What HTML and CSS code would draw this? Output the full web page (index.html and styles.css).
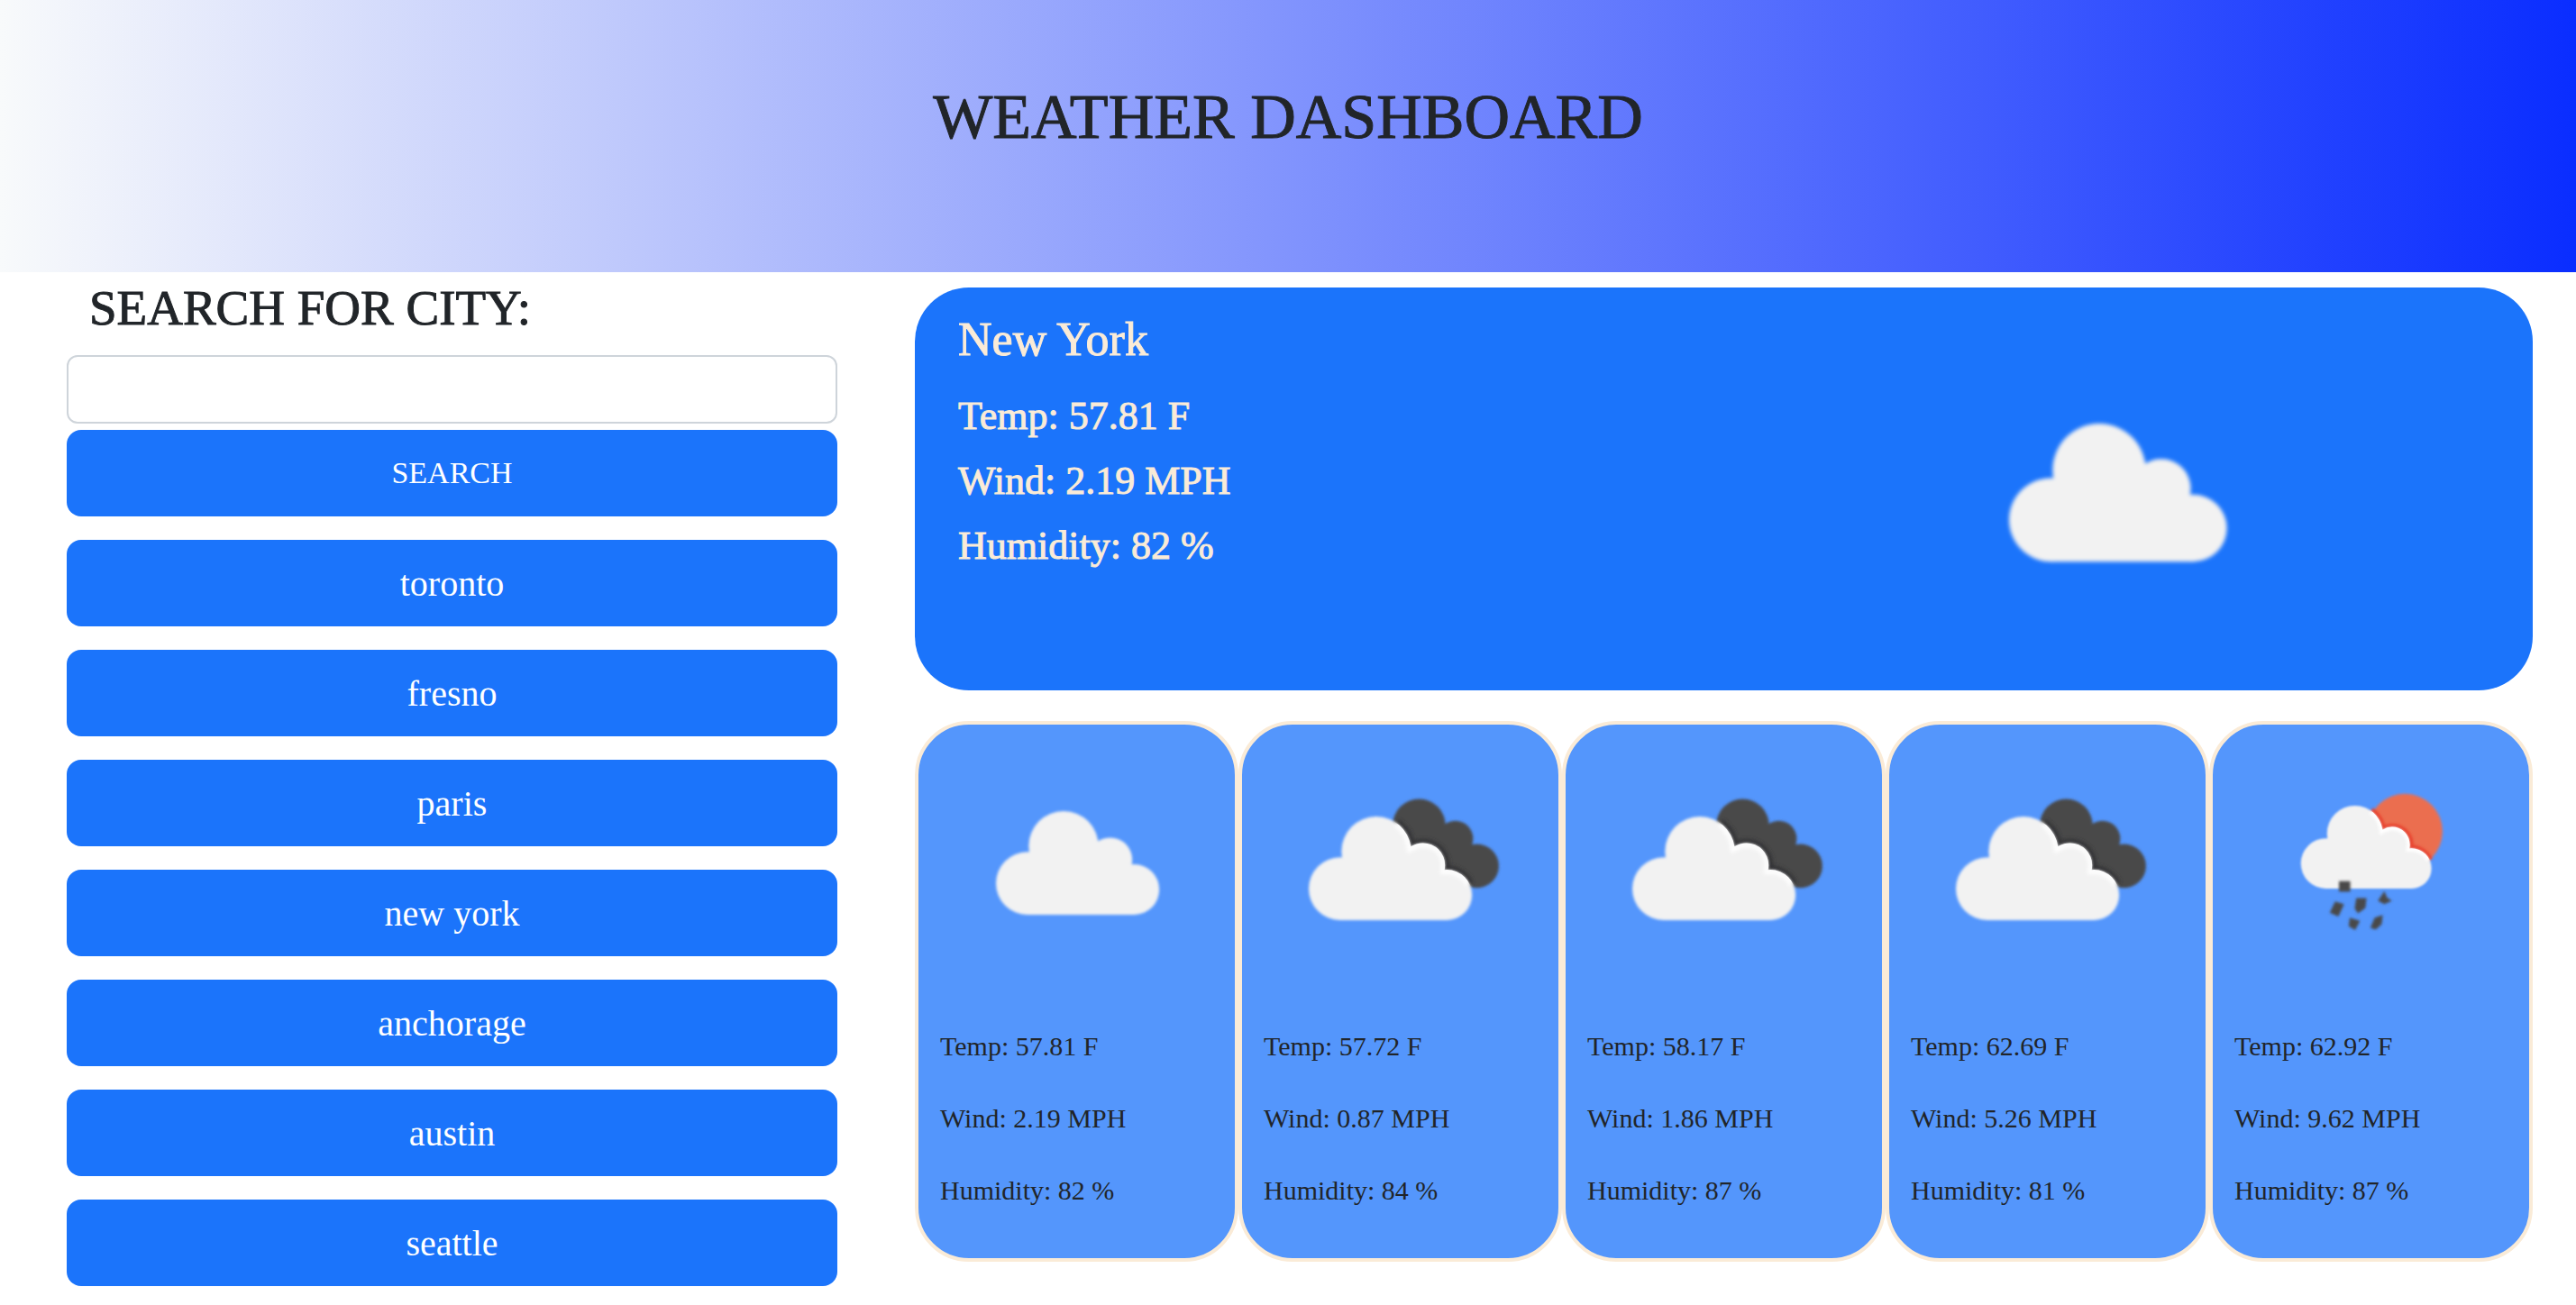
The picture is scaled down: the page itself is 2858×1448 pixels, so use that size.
FILE: index.html
```html
<!DOCTYPE html>
<html lang="en">
<head>
  <meta charset="utf-8">
  <meta name="viewport" content="width=device-width, initial-scale=1">
  <title>Weather Dashboard</title>
  <link rel="stylesheet" href="styles.css">
</head>
<body>
  <svg class="sprite" aria-hidden="true">
    <defs>
      <filter id="soft" x="-10%" y="-10%" width="120%" height="120%"><feGaussianBlur stdDeviation="0.5"/></filter>
      <filter id="glow" x="-20%" y="-20%" width="140%" height="140%"><feGaussianBlur stdDeviation="0.7"/></filter>
      <g id="cloud-shape">
        <circle cx="45" cy="43.9" r="12.9"/>
        <circle cx="62.2" cy="49" r="8.2"/>
        <circle cx="71.1" cy="60" r="9.3"/>
        <circle cx="31.6" cy="57.7" r="11.6"/>
        <path d="M31.6 57V69.3H71.2V57L66 50L58 44L40 46Z"/>
      </g>
      <path id="cloud-edge" d="M52.5 33.3A12.9 12.9 0 0 1 57.8 42.2A8.2 8.2 0 0 1 70.4 50.7A9.3 9.3 0 0 1 79.5 56"/>
      <clipPath id="cloud-clip">
        <circle cx="45" cy="43.9" r="12.9"/>
        <circle cx="62.2" cy="49" r="8.2"/>
        <circle cx="71.1" cy="60" r="9.3"/>
      </clipPath>
      <g id="lit-cloud">
        <use href="#cloud-shape" class="cloud" filter="url(#soft)"/>
        <g clip-path="url(#cloud-clip)"><use href="#cloud-edge" class="edge-light" filter="url(#glow)"/></g>
      </g>
      <symbol id="cloudy" viewBox="0 0 100 100">
        <use href="#cloud-shape" class="cloud" filter="url(#soft)"/>
      </symbol>
      <symbol id="overcast" viewBox="0 0 100 100">
        <g class="dark-cloud" filter="url(#soft)">
          <circle cx="56.8" cy="36.3" r="9.8"/>
          <circle cx="70.2" cy="41.2" r="6.6"/>
          <circle cx="78.2" cy="51.3" r="8.1"/>
          <path d="M50 40L64 36L74 42L80 48L77 59.2L60 55Z"/>
        </g>
        <g transform="translate(-4 2)">
          <use href="#cloud-edge" class="edge-dark" filter="url(#glow)"/>
          <use href="#lit-cloud"/>
        </g>
      </symbol>
      <symbol id="rain" viewBox="0 0 100 100">
        <circle class="sun" cx="62.4" cy="38.5" r="13.9" filter="url(#soft)"/>
        <g transform="translate(7.9 4.2) scale(0.8)">
          <use href="#cloud-edge" class="edge-red" filter="url(#glow)"/>
          <use href="#lit-cloud"/>
        </g>
        <g class="drops" filter="url(#soft)">
          <path d="M38 56.9H42.2V60.8H38Z"/>
          <path d="M36.6 64.4L39.9 65.4L37.8 70L34.6 68.6Z"/>
          <path d="M44.4 63.2H48.2L47.8 66.8L45 68.8L43.8 67Z"/>
          <path d="M54.8 60.6L55.8 63L57.6 64.2L54.8 65.4L52.4 64.2Z"/>
          <path d="M42 70.4L45.8 71.6L44 75L41.6 73.6Z"/>
          <path d="M51.2 70.4L54.2 69.4L53.8 72.8L51.6 74.8L49.6 74.2Z"/>
        </g>
      </symbol>
    </defs>
  </svg>

  <header class="banner">
    <h1 class="banner-title">WEATHER DASHBOARD</h1>
  </header>

  <main class="layout">
    <aside class="sidebar">
      <form class="search">
        <label class="search-label" for="city">SEARCH FOR CITY:</label>
        <input class="search-input" id="city" type="text">
        <button class="btn btn-search" type="button">SEARCH</button>
      </form>
      <div class="history">
        <button class="btn" type="button">toronto</button>
        <button class="btn" type="button">fresno</button>
        <button class="btn" type="button">paris</button>
        <button class="btn" type="button">new york</button>
        <button class="btn" type="button">anchorage</button>
        <button class="btn" type="button">austin</button>
        <button class="btn" type="button">seattle</button>
      </div>
    </aside>

    <div class="weather">
      <section class="current">
        <div class="current-info">
          <h2 class="current-city">New York</h2>
          <p>Temp: 57.81 F</p>
          <p>Wind: 2.19 MPH</p>
          <p>Humidity: 82 %</p>
        </div>
        <svg class="current-icon" role="img" aria-label="Cloudy"><use href="#cloudy"/></svg>
      </section>

      <section class="forecast">
        <article class="day">
          <svg class="day-icon" role="img" aria-label="Cloudy"><use href="#cloudy"/></svg>
          <p>Temp: 57.81 F</p>
          <p>Wind: 2.19 MPH</p>
          <p>Humidity: 82 %</p>
        </article>
        <article class="day">
          <svg class="day-icon" role="img" aria-label="Overcast"><use href="#overcast"/></svg>
          <p>Temp: 57.72 F</p>
          <p>Wind: 0.87 MPH</p>
          <p>Humidity: 84 %</p>
        </article>
        <article class="day">
          <svg class="day-icon" role="img" aria-label="Overcast"><use href="#overcast"/></svg>
          <p>Temp: 58.17 F</p>
          <p>Wind: 1.86 MPH</p>
          <p>Humidity: 87 %</p>
        </article>
        <article class="day">
          <svg class="day-icon" role="img" aria-label="Overcast"><use href="#overcast"/></svg>
          <p>Temp: 62.69 F</p>
          <p>Wind: 5.26 MPH</p>
          <p>Humidity: 81 %</p>
        </article>
        <article class="day">
          <svg class="day-icon" role="img" aria-label="Rain"><use href="#rain"/></svg>
          <p>Temp: 62.92 F</p>
          <p>Wind: 9.62 MPH</p>
          <p>Humidity: 87 %</p>
        </article>
      </section>
    </div>
  </main>
</body>
</html>
```
FILE: styles.css
```css
:root {
  --blue: #1b74fb;
  --blue-light: #5496fc;
  --cream: #faebd7;
  --ink: #212529;
}

* { box-sizing: border-box; }

body {
  margin: 0;
  background: #fff;
  color: var(--ink);
  font-family: "Liberation Serif", "Times New Roman", serif;
}

h1, h2, p { margin: 0; font-weight: 400; }

.sprite { position: absolute; width: 0; height: 0; }

.banner {
  padding: 88px 24px 130px;
  background: linear-gradient(to right, #f8fafb, #0a2dff);
  text-align: center;
}

.banner-title { font-size: 70px; line-height: 84px; }

/* Medium weight for the large text */
.banner-title,
.search-label,
.current-info { -webkit-text-stroke: 1px currentColor; }

.layout {
  display: grid;
  grid-template-columns: 855fr 1795fr;
  column-gap: 86px;
  align-items: start;
  padding: 0 48px 16px 74px;
}

.sidebar {
  display: flex;
  flex-direction: column;
  gap: 26px;
  padding-top: 8px;
}

.search, .history { display: flex; flex-direction: column; }
.history { gap: 26px; }

.search-label {
  margin-bottom: 20px;
  padding-left: 25px;
  font-size: 55px;
  line-height: 64px;
}

.search-input {
  height: 76px;
  margin-bottom: 7px;
  padding: 12px 24px;
  border: 2px solid #ced4da;
  border-radius: 12px;
  background: #fff;
  color: var(--ink);
  font: inherit;
  font-size: 34px;
}

.btn {
  height: 96px;
  padding: 0 24px;
  border: 0;
  border-radius: 16px;
  background: var(--blue);
  color: #fff;
  font: inherit;
  font-size: 40px;
}

.btn-search { font-size: 34px; }

.weather {
  display: flex;
  flex-direction: column;
  gap: 34px;
  padding-top: 17px;
}

.current {
  display: grid;
  grid-template-columns: 1fr 1fr;
  padding: 27px 32px 20px 48px;
  border-radius: 60px;
  background: var(--blue);
  color: var(--cream);
  font-size: 44px;
  line-height: 72px;
}

.current-city {
  margin-bottom: 18px;
  font-size: 52px;
  line-height: 62px;
}

.current-icon {
  width: 400px;
  height: 400px;
  justify-self: center;
}

.forecast { display: grid; grid-template-columns: repeat(5, 1fr); }

.day {
  display: flex;
  flex-direction: column;
  gap: 40px;
  padding: 3px 24px 55px;
  border: 4px solid var(--cream);
  border-radius: 60px;
  background: var(--blue-light);
  font-size: 30px;
  line-height: 40px;
}

.day-icon {
  width: 300px;
  height: 300px;
  margin-bottom: -6px;
  align-self: center;
}

.cloud { fill: #f2f2f2; }
.dark-cloud { fill: #48484a; }
.sun { fill: #eb6e4f; }
.drops { fill: #48484a; }

.edge-light, .edge-dark, .edge-red { fill: none; stroke-width: 3; }
.edge-light { stroke: #fff; }
.edge-dark { stroke: #323335; }
.edge-red { stroke: #e8432f; }
```
